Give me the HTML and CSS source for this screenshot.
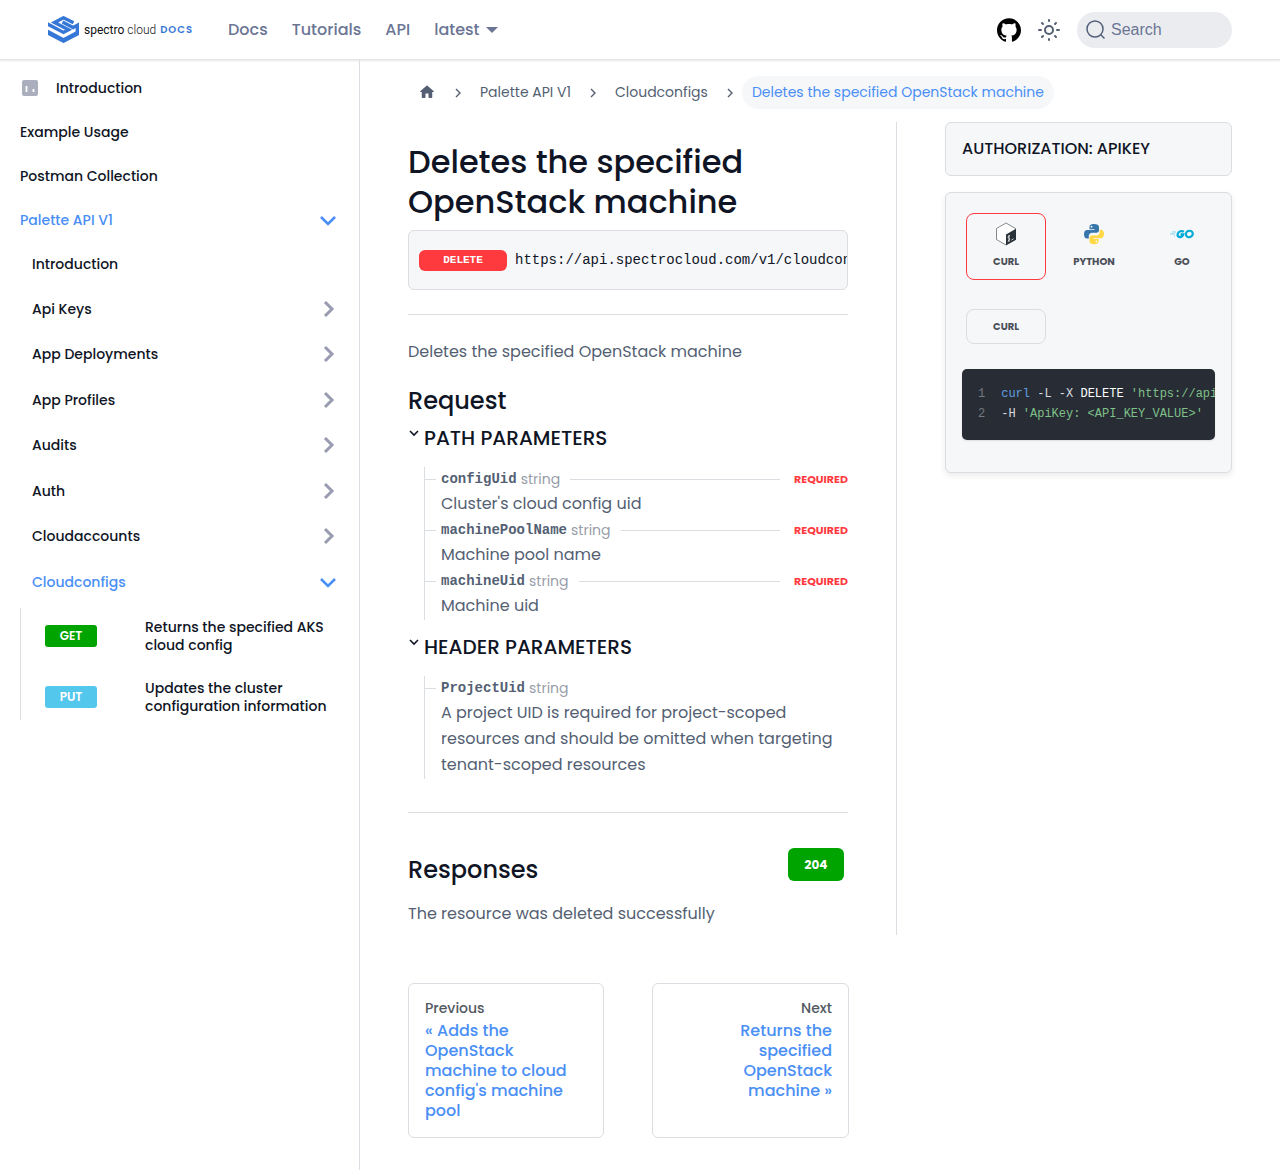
FILE: index.html
```html
<!DOCTYPE html>
<html lang="en">
<head>
<meta charset="utf-8">
<meta name="viewport" content="width=device-width, initial-scale=1">
<title>Deletes the specified OpenStack machine | Spectro Cloud Docs</title>
<link rel="stylesheet" href="styles.css">
</head>
<body>
<svg width="0" height="0" class="sprite" aria-hidden="true">
  <symbol id="chev-right" viewBox="0 0 16 20"><path d="M5 3l7 7-7 7" fill="none" stroke="currentColor" stroke-width="3"/></symbol>
  <symbol id="chev-down" viewBox="0 0 16 16"><path d="M1 5l7 7 7-7" fill="none" stroke="currentColor" stroke-width="2.6"/></symbol>
  <symbol id="crumb" viewBox="0 0 8 10"><path d="M2 1l4 4-4 4" fill="none" stroke="currentColor" stroke-width="1.4"/></symbol>
</svg>

<header class="navbar">
  <a class="brand" href="#" aria-label="Spectro Cloud Docs">
    <svg class="brand-mark" viewBox="0 0 31 27" fill="none" stroke="#3577d6" aria-hidden="true">
      <path d="M25.500 6.800L15.500 1.800 6.500 6.500 20.500 13.800 15.500 16.400-1 7.700" stroke-width="3.400"/>
      <path d="M14.500 6L25 11.600 32 7.800" stroke-width="3.400"/>
      <path d="M-1 15.800L15.500 24.500 32 15.800" stroke-width="4.600"/>
      <path d="M29.300 9v7" stroke-width="3.400"/>
    </svg>
    <span class="brand-name">spectro <span class="brand-light">cloud</span></span>
    <span class="brand-docs">DOCS</span>
  </a>
  <nav class="nav-links" aria-label="Main">
    <a href="#">Docs</a>
    <a href="#">Tutorials</a>
    <a href="#">API</a>
    <a class="version" href="#">latest</a>
  </nav>
  <div class="nav-tools">
    <a class="github" href="#" aria-label="GitHub repository">
      <svg viewBox="0 0 24 24" width="24" height="24" aria-hidden="true"><path d="M12 .297c-6.630 0-12 5.373-12 12 0 5.303 3.438 9.800 8.205 11.385.6.113.82-.258.82-.577 0-.285-.01-1.040-.015-2.040-3.338.724-4.042-1.610-4.042-1.610C4.422 18.070 3.633 17.700 3.633 17.700c-1.087-.744.084-.729.084-.729 1.205.084 1.838 1.236 1.838 1.236 1.070 1.835 2.809 1.305 3.495.998.108-.776.417-1.305.76-1.605-2.665-.3-5.466-1.332-5.466-5.930 0-1.310.465-2.380 1.235-3.220-.135-.303-.54-1.523.105-3.176 0 0 1.005-.322 3.300 1.230.96-.267 1.980-.399 3-.405 1.020.006 2.040.138 3 .405 2.280-1.552 3.285-1.230 3.285-1.230.645 1.653.24 2.873.12 3.176.765.84 1.230 1.910 1.230 3.220 0 4.610-2.805 5.625-5.475 5.920.42.36.81 1.096.81 2.220 0 1.606-.015 2.896-.015 3.286 0 .315.21.69.825.57C20.565 22.092 24 17.592 24 12.297c0-6.627-5.373-12-12-12"/></svg>
    </a>
    <button class="theme" type="button" aria-label="Switch between dark and light mode">
      <svg viewBox="0 0 24 24" width="24" height="24" fill="none" stroke="currentColor" stroke-width="2" stroke-linecap="round" aria-hidden="true"><circle cx="12" cy="12" r="4"/><path d="M12 2v1M12 21v1M2 12h2M20 12h2M5 5l1 1M18 18l1 1M5 19l1-1M18 6l1-1"/></svg>
    </button>
    <button class="search" type="button">
      <svg viewBox="0 0 20 20" width="20" height="20" fill="none" stroke="currentColor" stroke-width="1.500" aria-hidden="true"><circle cx="9" cy="9" r="8"/><path d="M14.500 14.500l4 4"/></svg>
      <span>Search</span>
    </button>
  </div>
</header>

<div class="page">
  <nav class="sidebar" aria-label="Docs sidebar">
    <ul class="menu">
      <li><a class="item" href="#"><svg class="intro-icon" viewBox="0 0 16 16" width="16" height="16" aria-hidden="true"><rect width="16" height="16" rx="2" fill="#abaebd"/><path d="M4.500 6v6M11.500 9v3" stroke="#fff" stroke-width="1.800"/></svg>Introduction</a></li>
      <li><a class="item" href="#">Example Usage</a></li>
      <li><a class="item" href="#">Postman Collection</a></li>
      <li>
        <a class="item active" href="#">Palette API V1<svg class="chev" aria-hidden="true"><use href="#chev-down"/></svg></a>
        <ul class="submenu">
          <li><a class="item" href="#">Introduction</a></li>
          <li><a class="item folder" href="#">Api Keys<svg class="chev" aria-hidden="true"><use href="#chev-right"/></svg></a></li>
          <li><a class="item folder" href="#">App Deployments<svg class="chev" aria-hidden="true"><use href="#chev-right"/></svg></a></li>
          <li><a class="item folder" href="#">App Profiles<svg class="chev" aria-hidden="true"><use href="#chev-right"/></svg></a></li>
          <li><a class="item folder" href="#">Audits<svg class="chev" aria-hidden="true"><use href="#chev-right"/></svg></a></li>
          <li><a class="item folder" href="#">Auth<svg class="chev" aria-hidden="true"><use href="#chev-right"/></svg></a></li>
          <li><a class="item folder" href="#">Cloudaccounts<svg class="chev" aria-hidden="true"><use href="#chev-right"/></svg></a></li>
          <li><a class="item folder active" href="#">Cloudconfigs<svg class="chev" aria-hidden="true"><use href="#chev-down"/></svg></a></li>
        </ul>
        <ul class="endpoints">
          <li><a class="endpoint" href="#"><span class="verb get">GET</span><span>Returns the specified AKS cloud config</span></a></li>
          <li><a class="endpoint" href="#"><span class="verb put">PUT</span><span>Updates the cluster configuration information</span></a></li>
        </ul>
      </li>
    </ul>
  </nav>

  <main class="content">
    <nav class="crumbs" aria-label="Breadcrumbs">
      <a class="home" href="#" aria-label="Home page"><svg viewBox="0 0 24 24" width="18" height="18" aria-hidden="true"><path d="M10 19v-5h4v5c0 .55.450 1 1 1h3c.550 0 1-.450 1-1v-7h1.700c.460 0 .680-.570.330-.870L12.670 3.600c-.380-.340-.960-.340-1.340 0l-8.360 7.530c-.340.300-.130.870.330.870H5v7c0 .55.450 1 1 1h3c.550 0 1-.450 1-1z" fill="currentColor"/></svg></a>
      <svg class="sep" aria-hidden="true"><use href="#crumb"/></svg>
      <a href="#">Palette API V1</a>
      <svg class="sep" aria-hidden="true"><use href="#crumb"/></svg>
      <a href="#">Cloudconfigs</a>
      <svg class="sep" aria-hidden="true"><use href="#crumb"/></svg>
      <span class="current" aria-current="page">Deletes the specified OpenStack machine</span>
    </nav>

    <div class="columns">
      <article class="doc">
        <h1>Deletes the specified OpenStack machine</h1>
        <div class="url-box"><span class="method">DELETE</span><code>https://api.spectrocloud.com/v1/cloudcon</code></div>
        <hr>
        <p class="lead">Deletes the specified OpenStack machine</p>
        <h2>Request</h2>

        <details open>
          <summary><svg viewBox="0 0 12 12" width="12" height="12" aria-hidden="true"><path d="M2 3l4 4 4-4" fill="none" stroke="currentColor" stroke-width="1.600"/></svg><h3>PATH PARAMETERS</h3></summary>
          <ul class="params">
            <li><div class="param"><strong>configUid</strong><span class="type">string</span><span class="rule"></span><span class="required">REQUIRED</span></div><p>Cluster's cloud config uid</p></li>
            <li><div class="param"><strong>machinePoolName</strong><span class="type">string</span><span class="rule"></span><span class="required">REQUIRED</span></div><p>Machine pool name</p></li>
            <li><div class="param"><strong>machineUid</strong><span class="type">string</span><span class="rule"></span><span class="required">REQUIRED</span></div><p>Machine uid</p></li>
          </ul>
        </details>

        <details open>
          <summary><svg viewBox="0 0 12 12" width="12" height="12" aria-hidden="true"><path d="M2 3l4 4 4-4" fill="none" stroke="currentColor" stroke-width="1.600"/></svg><h3>HEADER PARAMETERS</h3></summary>
          <ul class="params">
            <li><div class="param"><strong>ProjectUid</strong><span class="type">string</span></div><p>A project UID is required for project-scoped resources and should be omitted when targeting tenant-scoped resources</p></li>
          </ul>
        </details>

        <hr class="section-rule">
        <div class="responses">
          <h2>Responses</h2>
          <button class="status" type="button">204</button>
        </div>
        <p class="response-text">The resource was deleted successfully</p>
      </article>

      <aside class="tools">
        <div class="auth-box">AUTHORIZATION: APIKEY</div>
        <section class="code-panel" aria-label="Code samples">
          <div class="langs">
            <button class="lang selected" type="button">
              <svg viewBox="0 0 24 24" width="24" height="24" aria-hidden="true"><path d="M12 1l9.500 5.500v11L12 23l-9.500-5.500v-11z" fill="#fff" stroke="#555b60" stroke-width=".7"/><path d="M12 12.500L22 6.700v11L12 23.300z" fill="#293138"/><path d="M16 13.500c-2 .5-2.500 2-1.200 2.700s.8 2.400-1 3M15 13v7M17.500 18l2-1.200" fill="none" stroke="#fff" stroke-width=".8"/></svg>
              <span>CURL</span>
            </button>
            <button class="lang" type="button">
              <svg viewBox="0 0 24 24" width="24" height="24" aria-hidden="true"><path fill="#3776ab" d="M12 2C8.500 2 7.500 3.400 7.500 5v2.200h5v.8H5.200C3.200 8 2 9.500 2 12.200S3.200 16.500 5 16.500h1.800V14c0-1.800 1.500-3.200 3.200-3.200h4.500c1.500 0 2.500-1.100 2.500-2.500V5c0-2-2-3-5-3z"/><path fill="#ffd845" d="M12 22.300c3.500 0 4.500-1.400 4.500-3v-2.200h-5v-.8h7.300c2 0 3.200-1.500 3.200-4.200S20.800 7.800 19 7.800h-1.300v2.500c0 1.800-1.500 3.200-3.200 3.200H10c-1.500 0-2.500 1.100-2.500 2.500v3.300c0 2 2 3 4.500 3z"/><circle cx="9.500" cy="4.700" r=".9" fill="#fff"/><circle cx="14.400" cy="19.500" r=".9" fill="#fff"/></svg>
              <span>PYTHON</span>
            </button>
            <button class="lang" type="button">
              <svg viewBox="0 0 24 24" width="24" height="24" fill="none" stroke="#00acd7" aria-hidden="true"><path d="M2 10h4M0 12h5M4 14h1" stroke="#7fd5eb"/><path d="M13.800 9.900c-1.900-1.700-5.700-.6-6.200 2.200s3.200 4 5 1.800l.6-1.600h-2.700" stroke-width="2.200"/><ellipse cx="19.300" cy="12" rx="3.500" ry="3.100" stroke-width="2.200" transform="rotate(-20 19.300 12)"/></svg>
              <span>GO</span>
            </button>
          </div>
          <button class="variant" type="button">CURL</button>
          <pre class="code"><code><span class="row"><span class="num">1</span><span><span class="fn">curl</span> -L -X <span class="verb-text">DELETE</span> <span class="str">'https://api</span></span></span><span class="row"><span class="num">2</span><span>-H <span class="str">'ApiKey: &lt;API_KEY_VALUE&gt;'</span></span></span></code></pre>
        </section>
      </aside>
    </div>

    <nav class="pager" aria-label="Docs pages">
      <a class="page-link" href="#"><span class="pager-label">Previous</span><span class="pager-title">« Adds the OpenStack machine to cloud config's machine pool</span></a>
      <a class="page-link next" href="#"><span class="pager-label">Next</span><span class="pager-title">Returns the specified OpenStack machine »</span></a>
    </nav>
  </main>
</div>
</body>
</html>
```

FILE: styles.css
```css
* { box-sizing: border-box; }

:root {
  --sans: Poppins, Inter, "Noto Sans", sans-serif;
  --mono: "Liberation Mono", monospace;
  --ink: #0f1525;
  --text: #545f73;
  --link: #4a8ff5;
  --line: #dadde1;
  --panel: #f6f7f9;
}

body {
  margin: 0;
  display: flex;
  flex-direction: column;
  min-height: 100vh;
  font: 400 16px/26px var(--sans);
  color: var(--text);
  background: #fff;
}

a { color: inherit; text-decoration: none; }
ul { list-style: none; margin: 0; padding: 0; }
h1, h2, h3, p { margin: 0; }
h1, h2, h3 { color: var(--ink); font-weight: 500; }
button { font: inherit; color: inherit; padding: 0; border: 0; background: none; cursor: pointer; }
svg { flex: none; }
.sprite { position: absolute; }

/* Top bar */
.navbar {
  display: flex;
  align-items: center;
  height: 60px;
  padding: 0 48px;
  border-bottom: 1px solid #e3e4e6;
  box-shadow: 0 1px 2px rgba(0, 0, 0, .1);
}
.brand { display: flex; align-items: center; width: 145px; margin-right: 35px; color: #111; white-space: nowrap; }
.brand-mark { width: 31px; height: 27px; margin-right: 5px; }
.brand-name { font-family: Roboto, sans-serif; font-size: 12px; line-height: 20px; }
.brand-light { font-weight: 300; }
.brand-docs { margin-left: auto; font-size: 10px; line-height: 20px; font-weight: 600; letter-spacing: 1px; color: #3577d6; }
.nav-links { display: flex; gap: 24px; color: #6b7594; font-weight: 500; }
.version { display: flex; align-items: center; gap: 6px; }
.version::after { content: ""; border: 6px solid transparent; border-top-color: currentColor; border-bottom: 0; }
.nav-tools { display: flex; align-items: center; margin-left: auto; }
.github, .theme { display: flex; }
.github { color: #000; margin-right: 16px; }
.theme { margin-right: 16px; }
.search {
  display: flex;
  align-items: center;
  gap: 5px;
  width: 155px;
  height: 36px;
  padding: 0 9px;
  border-radius: 18px;
  background: #ebecf0;
  color: #6b7594;
  font-family: "Liberation Sans", sans-serif;
}
.search svg { color: #515f78; }

/* Layout */
.page { display: flex; flex: 1; }
.sidebar { width: 360px; flex: none; padding: 6px 20px 0; border-right: 1px solid var(--line); }
.content { flex: 1; min-width: 0; padding: 16px 48px 32px; }

/* Sidebar */
.item {
  display: flex;
  align-items: center;
  min-height: 44px;
  font-size: 14px;
  line-height: 18px;
  font-weight: 500;
  color: var(--ink);
}
.item.active { color: var(--link); }
.intro-icon { margin: 0 18px 0 2px; }
.chev { width: 16px; height: 20px; margin: 0 3px 0 auto; color: #999bb0; }
.active .chev { color: var(--link); }
.submenu .item { padding-left: 12px; }
.submenu .folder { min-height: 45px; }
.submenu li:nth-child(odd) .folder { min-height: 46px; }
.endpoints { margin-top: 4px; border-left: 1px solid var(--line); }
.endpoint {
  display: grid;
  grid-template-columns: 52px 1fr;
  column-gap: 48px;
  align-items: center;
  padding: 10px 0 15px 24px;
  font-size: 14px;
  line-height: 18px;
  font-weight: 500;
  color: var(--ink);
}
.endpoints li:last-child .endpoint { padding-bottom: 5px; }
.verb { border-radius: 3px; color: #fff; font-size: 12px; line-height: 22px; font-weight: 600; text-align: center; }
.get { background: #00a400; }
.put { background: #54c7ec; }

/* Breadcrumbs */
.crumbs { display: flex; align-items: center; font-size: 14px; line-height: 33px; white-space: nowrap; }
.home { display: flex; margin: 0 18px 2px 10px; }
.crumbs .sep { width: 8px; height: 10px; margin: 1px 18px 0; }
.crumbs .home + .sep { margin-left: 0; }
.crumbs .sep:nth-last-child(2) { margin-right: 8px; }
.current { padding: 0 10px; border-radius: 17px; background: #f6f7f9; color: var(--link); }

/* Main columns */
.columns { display: grid; grid-template-columns: 489fr 335fr; margin-top: 13px; }
.doc { min-width: 0; min-height: 813px; padding: 20px 48px 0 0; border-right: 1px solid var(--line); }
h1 { font-size: 32px; line-height: 40px; }
.url-box {
  display: flex;
  align-items: center;
  gap: 8px;
  height: 60px;
  margin-top: 8px;
  padding-left: 10px;
  overflow: hidden;
  border: 1px solid var(--line);
  border-radius: 6px;
  background: var(--panel);
  color: var(--ink);
}
.method {
  flex: none;
  width: 88px;
  border-radius: 6px;
  background: #ff3a3f;
  color: #fff;
  font: 700 11px/21px var(--mono);
  text-align: center;
}
code { font-family: var(--mono); font-size: 14px; }
hr { height: 1px; margin: 24px 0; border: 0; background: var(--line); }
h2 { font-size: 24px; line-height: 30px; }
.lead { margin-bottom: 21px; }
details { margin-top: 9px; }
details + details { margin-top: 14px; }
summary { display: flex; align-items: flex-start; gap: 4px; list-style: none; color: var(--ink); cursor: pointer; }
summary svg { margin-top: 3px; }
h3 { font-size: 20px; line-height: 26px; }
.params { margin: 16px 0 0 16px; border-left: 1px solid var(--line); }
.params li { padding: 0 0 1px 16px; }
.param { display: flex; align-items: center; height: 24px; margin-left: -16px; }
.param::before { content: ""; width: 11px; height: 1px; margin-right: 5px; background: var(--line); }
.param strong { font: 700 14px/24px var(--mono); }
.type { margin-left: 4px; font-size: 14px; line-height: 24px; color: #989da8; }
.rule { flex: 1; height: 1px; margin: 0 14px 0 10px; background: var(--line); }
.required { color: #ff3a3f; font-size: 11px; line-height: 24px; font-weight: 700; }
.section-rule { margin: 33px 0 35px; }
.responses { display: flex; justify-content: space-between; align-items: flex-start; padding-right: 4px; }
.responses h2 { margin-top: 7px; }
.status { width: 56px; height: 33px; border-radius: 6px; background: #00a400; color: #fff; font-size: 12px; font-weight: 700; }
.response-text { margin-top: 16px; }

/* Right column */
.tools { min-width: 0; padding-left: 48px; }
.auth-box {
  padding: 13px 16px;
  border: 1px solid var(--line);
  border-radius: 6px;
  background: var(--panel);
  color: var(--ink);
  font-weight: 500;
}
.code-panel {
  margin-top: 16px;
  padding: 20px 16px 32px;
  border: 1px solid var(--line);
  border-radius: 6px;
  background: var(--panel);
  box-shadow: 0 3px 6px rgba(0, 0, 0, .08);
}
.langs { display: flex; gap: 8px; margin-left: 4px; overflow: hidden; }
.lang, .variant { flex: none; width: 80px; border: 1px solid transparent; border-radius: 8px; color: #4b5058; font-size: 10px; font-weight: 700; }
.lang { display: flex; flex-direction: column; align-items: center; gap: 6px; height: 67px; padding-top: 8px; line-height: 20px; }
.lang.selected { border-color: #ff3a3f; }
.variant { display: block; height: 35px; margin: 29px 4px 25px; border-color: var(--line); line-height: 33px; }
.code {
  margin: 0;
  padding: 15px 0 15px 16px;
  overflow: hidden;
  border-radius: 5px;
  background: #282c34;
  color: #d7dae0;
  box-shadow: 0 1px 2px rgba(0, 0, 0, .1);
}
.code code { display: block; font-size: 12px; line-height: 20px; padding-bottom: 1px; }
.row { display: flex; gap: 16px; }
.num { color: #747983; }
.fn { color: #61a0e0; }
.verb-text { color: #fff; }
.str { color: #7fc08a; }

/* Previous / next */
.pager { display: grid; grid-template-columns: 196px 197px; gap: 48px; margin-top: 48px; }
.page-link { padding: 15px 16px 16px; border: 1px solid var(--line); border-radius: 6px; font-weight: 500; }
.next { text-align: right; padding-left: 64px; }
.pager-label { display: block; font-size: 14px; line-height: 18px; margin-bottom: 4px; color: #525860; }
.pager-title { display: block; line-height: 20px; color: var(--link); }
```
